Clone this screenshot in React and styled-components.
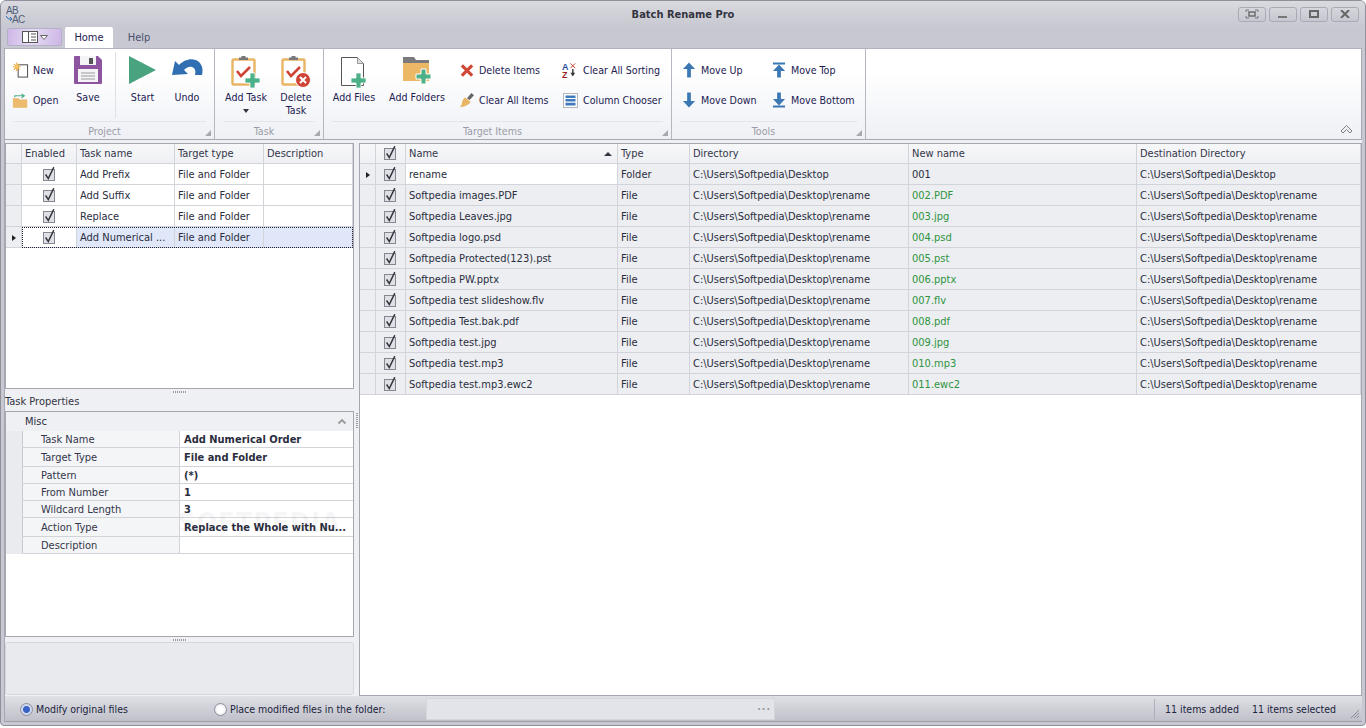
import React from "react";
import styled, { createGlobalStyle } from "styled-components";

const Global = createGlobalStyle`
  html, body { margin: 0; padding: 0; background: #fff; }
  body { font-family: "DejaVu Sans", "Noto Sans", sans-serif; font-stretch: condensed; font-size: 11px; color: #20243c; }
  #root { width: 1366px; height: 728px; overflow: hidden; }
`;

const Win = styled.div`
  width: 1366px; height: 726px; box-sizing: border-box; padding-bottom: 3px;
  background: #c7c8d1; border: 1px solid #8f9099; border-radius: 6px 6px 4px 4px;
  display: flex; flex-direction: column; overflow: hidden;
`;
const TitleBar = styled.div`
  height: 26px; flex: none; display: flex; align-items: center; justify-content: space-between;
  padding: 0 6px 0 4px; position: relative;
  background: linear-gradient(#d9d9df, #c7c8d1);
`;
const TitleText = styled.div`
  position: absolute; left: 0; right: 0; text-align: center; font-weight: bold; color: #33343f; font-size: 11px;
`;
const Logo = styled.div`
  position: relative; width: 20px; height: 20px; margin-top: 3px; color: #4f6079; font-size: 10px; line-height: 10px; letter-spacing: -0.6px; font-family: "Liberation Sans", sans-serif;
  span { position: absolute; left: 1px; top: 0; }
  span + span { left: 7px; top: 9px; }
  svg { position: absolute; left: 0; top: 9px; }
`;
const WinBtns = styled.div` display: flex; gap: 3px; position: relative; `;
const WinBtn = styled.div`
  width: ${p => p.$w}px; height: 15px; box-sizing: border-box; border: 1px solid #a9aab4; border-radius: 3px;
  background: linear-gradient(#d6d7dd, #c5c6cf); display: flex; align-items: center; justify-content: center;
`;
const TabRow = styled.div`
  height: 21px; flex: none; display: flex; align-items: flex-end; padding-left: 6px;
`;
const AppBtn = styled.div`
  width: 55px; height: 18px; margin-bottom: 2px; box-sizing: border-box; border: 1px solid #b6afc9; border-radius: 2px;
  background: linear-gradient(100deg, #cdb6e6, #e5dcf3 45%, #cdb6e6); display: flex; align-items: center; justify-content: center; gap: 2px;
`;
const Tab = styled.div`
  height: 21px; box-sizing: border-box; display: flex; align-items: center; justify-content: center;
  width: ${p => p.$w}px; margin-left: ${p => p.$ml}px; border-radius: 2px 2px 0 0;
  color: ${p => (p.$active ? "#1c2050" : "#4a4f6c")};
  background: ${p => (p.$active ? "#fff" : "transparent")};
`;
const Ribbon = styled.div`
  height: 92px; flex: none; margin: 0 3px 0 4px; box-sizing: border-box; display: flex; position: relative; font-size: 10.6px;
  border: 1px solid #a7a8b2; border-width: 0 1px 1px 0; border-top: 1px solid #b1b2bb;
  background: linear-gradient(#ffffff 25%, #eef0f5);
  box-shadow: -1px 0 0 #a7a8b2;
`;
const Group = styled.div`
  width: ${p => p.$w}px; flex: none; box-sizing: border-box; border-right: 1px solid #b6b7c0; display: flex; flex-direction: column; position: relative;
`;
const GroupBody = styled.div` height: 72px; flex: none; display: flex; `;
const GroupLabel = styled.div`
  margin: 0 8px; flex: 1; border-top: 1px solid #e4e5ea; display: flex; align-items: center; justify-content: center; color: #9b9ca6; padding: 1px 10px 0 0;
`;
const Corner = styled.i`
  position: absolute; right: 3px; bottom: 3px; width: 0; height: 0;
  border-left: 6px solid transparent; border-bottom: 6px solid #a8a9b0;
`;
const Large = styled.div`
  width: ${p => p.$w}px; flex: none; display: flex; flex-direction: column; align-items: center; padding-top: 7px; text-align: center; color: #1c2050; line-height: 13px;
`;
const LargeIcon = styled.div` height: 28px; margin-bottom: 7px; display: flex; justify-content: center; `;
const Drop = styled.i`
  display: block; width: 0; height: 0; margin-top: 5px; border: 3.5px solid transparent; border-top: 4px solid #33343f; border-bottom: 0;
`;
const Divider = styled.div` width: 1px; flex: none; margin: 3px 0 3px 7px; background: #e0e1e6; `;
const SmallCol = styled.div`
  width: ${p => p.$w}px; margin-left: ${p => p.$ml || 0}px; flex: none; display: flex; flex-direction: column; padding-top: 6px;
`;
const Small = styled.div`
  height: 30px; display: flex; align-items: center; gap: ${p => p.$gap || 4}px; color: #1c2050; white-space: nowrap;
`;
const IconBox = styled.span` width: ${p => p.$w}px; flex: none; display: flex; justify-content: center; `;
const Collapse = styled.svg` position: absolute; right: 8px; bottom: 5px; `;

const Main = styled.div`
  flex: 1; min-height: 0; display: flex; margin: 0 3px 0 4px; padding-top: 3px; background: #eef0f4; box-shadow: -1px 0 0 #a7a8b2;
`;
const Left = styled.div` width: 349px; flex: none; display: flex; flex-direction: column; `;
const VSplit = styled.div`
  width: 5px; flex: none; display: flex; justify-content: center; padding-top: 270px; box-sizing: border-box;
`;
const VGrip = styled.i`
  display: block; width: 2px; height: 15px; background: repeating-linear-gradient(#9a9ba4 0 1px, transparent 1px 2px);
`;
const Box = styled.div`
  box-sizing: border-box; border: 1px solid #a5a6af; background: #fff; position: relative; overflow: hidden;
  height: ${p => p.$h ? p.$h + "px" : "auto"}; flex: ${p => p.$h ? "none" : 1};
`;
const HSplit = styled.div` height: ${p => p.$h}px; flex: none; display: flex; justify-content: center; padding-top: 2px; box-sizing: border-box; `;
const HGrip = styled.i`
  display: block; width: 13px; height: 2px; background: repeating-linear-gradient(90deg, #9a9ba4 0 1px, transparent 1px 2px);
`;
const PanelTitle = styled.div` height: 18px; flex: none; line-height: 17px; color: #33343f; `;
const Empty = styled.div`
  height: 53px; flex: none; box-sizing: border-box; border: 1px solid #d6d7dc; border-radius: 3px; background: #e9eaee;
`;
const TRow = styled.div`
  display: grid; grid-template-columns: ${p => p.$cols}; height: ${p => p.$h || 21}px; box-sizing: border-box; position: relative;
`;
const Cell = styled.div`
  box-sizing: border-box; border-right: 1px solid #d3d4da; border-bottom: 1px solid #d3d4da; display: flex; align-items: center; padding-left: ${p => p.$pl ?? 3}px;
  overflow: hidden; white-space: nowrap; color: ${p => p.$color || "#2a2d3d"};
  background: ${p => p.$bg || "#fff"}; justify-content: ${p => (p.$center ? "center" : "flex-start")};
  padding-top: 1px;
`;
const HeadCell = styled(Cell)`
  background: linear-gradient(#f7f7f9, #eef0f3); color: #33364a; justify-content: ${p => (p.$center ? "center" : "space-between")}; padding-right: ${p => p.$pr || 0}px; padding-top: 0;
`;
const Focus = styled.div`
  position: absolute; inset: 0 0 0 16px; border: 1px dotted #20243c; pointer-events: none;
`;
const Arrow = styled.i`
  display: block; width: 0; height: 0; border-left: 4px solid #222; border-top: 3.5px solid transparent; border-bottom: 3.5px solid transparent;
`;
const SortMark = styled.i`
  display: block; width: 0; height: 0; border-bottom: 4px solid #33343f; border-left: 4px solid transparent; border-right: 4px solid transparent;
`;
const Green = styled.span` color: #2e9440; `;

const PRow = styled.div`
  display: grid; grid-template-columns: 16px 158px 1fr; height: ${p => p.$h}px; box-sizing: border-box;
`;
const PStrip = styled.div` background: #e9ebee; `;
const PName = styled.div`
  box-sizing: border-box; border-left: 1px solid #c9cad0; border-right: 1px solid #d3d4da; border-bottom: 1px solid #d3d4da; padding-left: 18px; display: flex; align-items: center; color: #33364a; background: #f4f5f7;
`;
const PVal = styled.div`
  box-sizing: border-box; border-bottom: 1px solid #d3d4da; padding-left: 4px; font-weight: bold; display: flex; align-items: center; color: #2a2d3d; white-space: nowrap; overflow: hidden;
`;
const MiscRow = styled.div`
  height: 19px; box-sizing: border-box; padding: 0 6px 0 19px; display: flex; align-items: center; justify-content: space-between; background: #eef0f3; color: #2a2d3d;
`;
const Watermark = styled.div`
  position: absolute; left: 172px; top: 95px; font-size: 27px; font-weight: bold; letter-spacing: 1px; color: rgba(120,120,130,.07); pointer-events: none;
`;

const Status = styled.div`
  height: 26px; flex: none; margin: 0 3px 0 4px; box-sizing: border-box; display: flex; align-items: center; position: relative; padding: 1px 0 0 15px; font-size: 10.5px;
  background: linear-gradient(#e0e1e6, #bfc0c9); border-bottom: 1px solid #9d9ea8; box-shadow: -1px 0 0 #a7a8b2; color: #20243c;
`;
const RadioWrap = styled.div` display: flex; align-items: center; gap: 3px; width: ${p => p.$w}px; flex: none; `;
const Radio = styled.i`
  display: block; width: 13px; height: 13px; border-radius: 50%; box-sizing: border-box; border: 1px solid #8d8f9d;
  background: ${p => p.$on ? "radial-gradient(circle, #3a63c6 0 3px, #cfd9ee 4px)" : "radial-gradient(circle, #fff 0 3px, #d5d6dc)"};
`;
const PathInput = styled.div`
  width: 349px; height: 22px; flex: none; background: #e3e4e9; box-sizing: border-box; border: 1px solid #d5d6dc; display: flex; justify-content: flex-end; padding-right: 3px; align-items: center; color: #9a9ba4; letter-spacing: 1px; font-weight: bold; margin-top: -1px;
`;
const StatusRight = styled.div`
  margin-left: 379px; height: 20px; border-left: 1px solid #aeafb8; padding-left: 10px; display: flex; align-items: center; gap: 13px;
`;
const Grip = styled.svg` position: absolute; right: 2px; bottom: 2px; `;

const Check = () => (
  <svg width="15" height="16" viewBox="0 0 15 16">
    <rect x="1.5" y="2.5" width="11" height="11" fill="#dfe0e5" stroke="#85868f" />
    <path d="M3.6 7.5 L6.3 11.6 L11.8 0.2" fill="none" stroke="#33343c" strokeWidth="1.5" />
  </svg>
);

const IconNew = () => (
  <svg width="18" height="18" viewBox="0 0 18 18"><rect x="6.5" y="3.5" width="10" height="13" fill="#fff" stroke="#444" />
    <path d="M5 1v9M1 5.5h8M2 2.5l6 6M8 2.5l-6 6" stroke="#e9a93c" strokeWidth="1.2" /><circle cx="5" cy="5.5" r="2" fill="#f6c667" /></svg>
);
const IconOpen = () => (
  <svg width="18" height="17" viewBox="0 0 18 17"><path d="M1 6h6l1 1.5h8V16H1z" fill="#e9b565" /><path d="M1 8h15v8H1z" fill="#ecbb6e" /><path d="M3 5V3.5h9M10 1.5l3 2-3 2" fill="none" stroke="#4caf88" strokeWidth="1.2" /></svg>
);
const IconSave = () => (
  <svg width="28" height="28" viewBox="0 0 28 28"><path d="M1 0h23l4 4v23a1 1 0 0 1-1 1H1a1 1 0 0 1-1-1V1a1 1 0 0 1 1-1z" fill="#8d55a0" />
    <rect x="6" y="0" width="16" height="9" fill="#f4f4f6" /><rect x="15" y="2" width="4" height="6" fill="#555" /><rect x="4" y="13" width="20" height="13" fill="#f4f4f6" />
    <path d="M7 17h14M7 20h14M7 23h14" stroke="#9b9ba2" /></svg>
);
const IconStart = () => (
  <svg width="28" height="28" viewBox="0 0 28 28"><path d="M0 0 L27 14 L0 28z" fill="#4aa37f" /></svg>
);
const IconUndo = () => (
  <svg width="31" height="28" viewBox="0 0 31 28"><path d="M0 19 L3 5 L7 9 C12 3 22 1 27 6 C31 10 31 15 30 19 L23 19 C24 15 23 12 20 11 C17 10 14 12 12 14 L16 18 Z" fill="#2f6fb2" /></svg>
);
const Clip = ({ children }) => (
  <svg width="30" height="32" viewBox="0 0 30 32"><rect x="1.5" y="3.5" width="22" height="25" rx="1" fill="#fff" stroke="#e9b565" strokeWidth="2.4" />
    <path d="M8 4h9V1.5h-2.5V0h-4v1.5H8z" fill="#777" /><path d="M6 15l4 5 9-9" fill="none" stroke="#cf4436" strokeWidth="2.6" />{children}</svg>
);
const IconAddTask = () => <Clip><path d="M19 17h5v5h5v5h-5v5h-5v-5h-5v-5h5z" fill="#4cb088" stroke="#fff" strokeWidth="0.8" /></Clip>;
const IconDelTask = () => (
  <Clip><circle cx="22" cy="24" r="7.5" fill="#cf4436" stroke="#fff" /><path d="M19 21l6 6M25 21l-6 6" stroke="#fff" strokeWidth="2" /></Clip>
);
const IconFiles = () => (
  <svg width="30" height="32" viewBox="0 0 30 32"><path d="M2.5 1.5h16l6 6v22h-22z" fill="#fff" stroke="#555" /><path d="M18.5 1.5v6h6" fill="#ddd" stroke="#999" />
    <path d="M17 17h5v5h5v5h-5v5h-5v-5h-5v-5h5z" fill="#4cb088" stroke="#fff" strokeWidth="0.8" /></svg>
);
const IconFolders = () => (
  <svg width="31" height="30" viewBox="0 0 31 30"><path d="M1 1h11l2 3h13v3H1z" fill="#7a7a7c" /><rect x="1" y="7" width="26" height="18" fill="#ecb866" />
    <path d="M19 13h5v5h5v5h-5v5h-5v-5h-5v-5h5z" fill="#4cb088" stroke="#fff" strokeWidth="1" /></svg>
);
const IconDelete = () => (
  <svg width="15" height="15" viewBox="0 0 15 15"><path d="M2 2l11 11M13 2L2 13" stroke="#cf4a37" strokeWidth="3.4" /></svg>
);
const IconBrush = () => (
  <svg width="16" height="16" viewBox="0 0 16 16"><path d="M8 6 L13 0 L16 2.5 L11 8z" fill="#666" /><path d="M6 5l6 5c-1 3-6 6-12 6 2-2 2-4 2.500-6 .5-2 1.500-4 3.500-5z" fill="#e9b565" /></svg>
);
const IconSort = () => (
  <svg width="17" height="17" viewBox="0 0 17 17"><text x="0" y="8" fontSize="9.5" fontWeight="bold" fill="#2a4fa0" fontFamily="Liberation Sans">A</text><text x="0" y="16.500" fontSize="9.500" fontWeight="bold" fill="#a02424" fontFamily="Liberation Sans">Z</text>
    <path d="M9 1l5 5M14 1L9 6" stroke="#c0392b" /><path d="M11.5 7v5" stroke="#333" strokeWidth="1.5" /><path d="M9 11h5l-2.500 4z" fill="#333" /></svg>
);
const IconCols = () => (
  <svg width="15" height="15" viewBox="0 0 15 15"><rect x=".5" y=".5" width="14" height="14" fill="#fff" stroke="#b5b6bd" /><path d="M2.500 2.500h10v2.400h-10zM2.500 6h10v2.600h-10zM2.500 9.800h10v2.800h-10z" fill="#3f79bd" /></svg>
);
const Up = () => <svg width="15" height="16" viewBox="0 0 15 16"><path d="M7.500 0L14 7H9.500v9h-4V7H1z" fill="#3c78b4" /></svg>;
const Down = () => <svg width="15" height="16" viewBox="0 0 15 16"><path d="M7.500 16L1 9h4.500V0h4v9H14z" fill="#3c78b4" /></svg>;
const Top = () => <svg width="15" height="16" viewBox="0 0 15 16"><path d="M1 0h13v2H1zM7.500 2L14 9H9.500v7h-4V9H1z" fill="#3c78b4" /></svg>;
const Bottom = () => <svg width="15" height="16" viewBox="0 0 15 16"><path d="M1 14h13v2H1zM7.500 14L1 7h4.500V0h4v7H14z" fill="#3c78b4" /></svg>;

const tasks = ["Add Prefix", "Add Suffix", "Replace", "Add Numerical ..."];
const files = [
  ["rename", "Folder", "C:\\Users\\Softpedia\\Desktop", "001", "C:\\Users\\Softpedia\\Desktop"],
  ["Softpedia images.PDF", "File", "C:\\Users\\Softpedia\\Desktop\\rename", "002.PDF"],
  ["Softpedia Leaves.jpg", "File", "C:\\Users\\Softpedia\\Desktop\\rename", "003.jpg"],
  ["Softpedia logo.psd", "File", "C:\\Users\\Softpedia\\Desktop\\rename", "004.psd"],
  ["Softpedia Protected(123).pst", "File", "C:\\Users\\Softpedia\\Desktop\\rename", "005.pst"],
  ["Softpedia PW.pptx", "File", "C:\\Users\\Softpedia\\Desktop\\rename", "006.pptx"],
  ["Softpedia test slideshow.flv", "File", "C:\\Users\\Softpedia\\Desktop\\rename", "007.flv"],
  ["Softpedia Test.bak.pdf", "File", "C:\\Users\\Softpedia\\Desktop\\rename", "008.pdf"],
  ["Softpedia test.jpg", "File", "C:\\Users\\Softpedia\\Desktop\\rename", "009.jpg"],
  ["Softpedia test.mp3", "File", "C:\\Users\\Softpedia\\Desktop\\rename", "010.mp3"],
  ["Softpedia test.mp3.ewc2", "File", "C:\\Users\\Softpedia\\Desktop\\rename", "011.ewc2"],
];
const props = [
  ["Task Name", "Add Numerical Order", 17], ["Target Type", "File and Folder", 19], ["Pattern", "(*)", 17], ["From Number", "1", 17],
  ["Wildcard Length", "3", 17], ["Action Type", "Replace the Whole with Nu...", 19], ["Description", "", 17],
];
const taskCols = "16px 55px 98px 89px 1fr";
const fileCols = "16px 30px 212px 72px 219px 228px 1fr";
const GB = "#eceef1";

export default function App() {
  return (
    <Win>
      <Global />
      <TitleBar>
        <Logo>
          <span>AB</span><span>AC</span>
          <svg width="8" height="8" viewBox="0 0 8 8"><path d="M1 1l2.500 3H7M5 2l2 2-2 2" fill="none" stroke="#2f6fb2" /></svg>
        </Logo>
        <TitleText>Batch Rename Pro</TitleText>
        <WinBtns>
          <WinBtn $w={28}><svg width="14" height="10" viewBox="0 0 14 10"><path d="M1 3V1h3M10 1h3v2M13 7v2h-3M4 9H1V7" fill="none" stroke="#777" /><rect x="4" y="3" width="6" height="4" fill="none" stroke="#666" strokeWidth="1.4" /></svg></WinBtn>
          <WinBtn $w={28}><svg width="10" height="8" viewBox="0 0 10 8"><rect y="6" width="9" height="2" fill="#777" /></svg></WinBtn>
          <WinBtn $w={28}><svg width="10" height="8" viewBox="0 0 10 8"><rect x="1" y="1" width="8" height="6" fill="none" stroke="#666" strokeWidth="2" /></svg></WinBtn>
          <WinBtn $w={28}><svg width="10" height="8" viewBox="0 0 10 8"><path d="M1 0l8 8M9 0L1 8" stroke="#666" strokeWidth="2" /></svg></WinBtn>
        </WinBtns>
      </TitleBar>
      <TabRow>
        <AppBtn>
          <svg width="16" height="12" viewBox="0 0 16 12"><rect x=".5" y=".5" width="15" height="11" fill="#fff" stroke="#555" /><path d="M6.500 0v12M9 3h5M9 6h5M9 9h5" stroke="#555" /></svg>
          <svg width="8" height="5" viewBox="0 0 8 5"><path d="M.5.5h7L4 4.500z" fill="#fff" stroke="#666" /></svg>
        </AppBtn>
        <Tab $active $w={48} $ml={3}>Home</Tab>
        <Tab $w={52} $ml={0}>Help</Tab>
      </TabRow>
      <Ribbon>
        <Group $w={210}>
          <GroupBody>
            <SmallCol $w={56} $ml={7}>
              <Small><IconBox $w={17}><IconNew /></IconBox>New</Small>
              <Small><IconBox $w={17}><IconOpen /></IconBox>Open</Small>
            </SmallCol>
            <Large $w={40}><LargeIcon><IconSave /></LargeIcon>Save</Large>
            <Divider />
            <Large $w={53}><LargeIcon><IconStart /></LargeIcon>Start</Large>
            <Large $w={36}><LargeIcon><IconUndo /></LargeIcon>Undo</Large>
          </GroupBody>
          <GroupLabel>Project</GroupLabel><Corner />
        </Group>
        <Group $w={109}>
          <GroupBody>
            <Large $w={62}><LargeIcon><IconAddTask /></LargeIcon>Add Task<Drop /></Large>
            <Large $w={38}><LargeIcon><IconDelTask /></LargeIcon>Delete<br />Task</Large>
          </GroupBody>
          <GroupLabel>Task</GroupLabel><Corner />
        </Group>
        <Group $w={348}>
          <GroupBody>
            <Large $w={60}><LargeIcon><IconFiles /></LargeIcon>Add Files</Large>
            <Large $w={66}><LargeIcon><IconFolders /></LargeIcon>Add Folders</Large>
            <SmallCol $w={102} $ml={10}>
              <Small $gap={5}><IconBox $w={14}><IconDelete /></IconBox>Delete Items</Small>
              <Small $gap={5}><IconBox $w={14}><IconBrush /></IconBox>Clear All Items</Small>
            </SmallCol>
            <SmallCol $w={102}>
              <Small $gap={5}><IconBox $w={16}><IconSort /></IconBox>Clear All Sorting</Small>
              <Small $gap={5}><IconBox $w={16}><IconCols /></IconBox>Column Chooser</Small>
            </SmallCol>
          </GroupBody>
          <GroupLabel>Target Items</GroupLabel><Corner />
        </Group>
        <Group $w={194}>
          <GroupBody>
            <SmallCol $w={90} $ml={10}>
              <Small $gap={5}><IconBox $w={14}><Up /></IconBox>Move Up</Small>
              <Small $gap={5}><IconBox $w={14}><Down /></IconBox>Move Down</Small>
            </SmallCol>
            <SmallCol $w={90}>
              <Small $gap={5}><IconBox $w={14}><Top /></IconBox>Move Top</Small>
              <Small $gap={5}><IconBox $w={14}><Bottom /></IconBox>Move Bottom</Small>
            </SmallCol>
          </GroupBody>
          <GroupLabel>Tools</GroupLabel><Corner />
        </Group>
        <Collapse width="13" height="10" viewBox="0 0 13 10"><path d="M1 7l5.500-5.500L12 7l-2 2-3.500-3.500L3 9z" fill="#eef0f4" stroke="#7d7e86" /></Collapse>
      </Ribbon>
      <Main>
        <Left>
          <Box $h={246}>
            <TRow $cols={taskCols} $h={20}>
              <HeadCell />
              <HeadCell>Enabled</HeadCell>
              <HeadCell>Task name</HeadCell>
              <HeadCell>Target type</HeadCell>
              <HeadCell>Description</HeadCell>
            </TRow>
            {tasks.map((t, i) => {
              const sel = i === 3;
              const bg = sel ? "#dfe7f8" : "#fff";
              return (
                <TRow key={t} $cols={taskCols}>
                  <Cell $bg={GB} $center $pl={0}>{sel && <Arrow />}</Cell>
                  <Cell $center $pl={0}><Check /></Cell>
                  <Cell $bg={bg}>{t}</Cell>
                  <Cell $bg={bg}>File and Folder</Cell>
                  <Cell $bg={bg} />
                  {sel && <Focus />}
                </TRow>
              );
            })}
          </Box>
          <HSplit $h={4}><HGrip /></HSplit>
          <PanelTitle>Task Properties</PanelTitle>
          <Box $h={226}>
            <MiscRow>Misc
              <svg width="10" height="7" viewBox="0 0 10 7"><path d="M1.500 5.500L5 2l3.500 3.500" fill="none" stroke="#999" strokeWidth="1.800" /></svg>
            </MiscRow>
            {props.map(([n, v, h]) => (
              <PRow key={n} $h={h}>
                <PStrip />
                <PName>{n}</PName>
                <PVal>{v}</PVal>
              </PRow>
            ))}
            <Watermark>SOFTPEDIA</Watermark>
          </Box>
          <HSplit $h={5}><HGrip /></HSplit>
          <Empty />
        </Left>
        <VSplit><VGrip /></VSplit>
        <Box>
          <TRow $cols={fileCols} $h={20}>
            <HeadCell />
            <HeadCell $center $pl={0}><Check /></HeadCell>
            <HeadCell $pr={5}>Name<SortMark /></HeadCell>
            <HeadCell>Type</HeadCell>
            <HeadCell>Directory</HeadCell>
            <HeadCell>New name</HeadCell>
            <HeadCell>Destination Directory</HeadCell>
          </TRow>
          {files.map((f, i) => (
            <TRow key={f[0]} $cols={fileCols}>
              <Cell $bg={GB} $center $pl={0}>{i === 0 && <Arrow />}</Cell>
              <Cell $bg={GB} $center $pl={0}><Check /></Cell>
              <Cell $bg={i === 0 ? "#fff" : GB}>{f[0]}</Cell>
              <Cell $bg={GB}>{f[1]}</Cell>
              <Cell $bg={GB}>{f[2]}</Cell>
              <Cell $bg={GB}>{i === 0 ? f[3] : <Green>{f[3]}</Green>}</Cell>
              <Cell $bg={GB}>{f[4] || f[2]}</Cell>
            </TRow>
          ))}
        </Box>
      </Main>
      <Status>
        <RadioWrap $w={194}><Radio $on />Modify original files</RadioWrap>
        <RadioWrap $w={212}><Radio />Place modified files in the folder:</RadioWrap>
        <PathInput>···</PathInput>
        <StatusRight><span>11 items added</span><span>11 items selected</span></StatusRight>
        <Grip width="11" height="11" viewBox="0 0 11 11"><path d="M10 2L2 10M10 5L5 10M10 8L8 10" stroke="#8b8c95" /></Grip>
      </Status>
    </Win>
  );
}
